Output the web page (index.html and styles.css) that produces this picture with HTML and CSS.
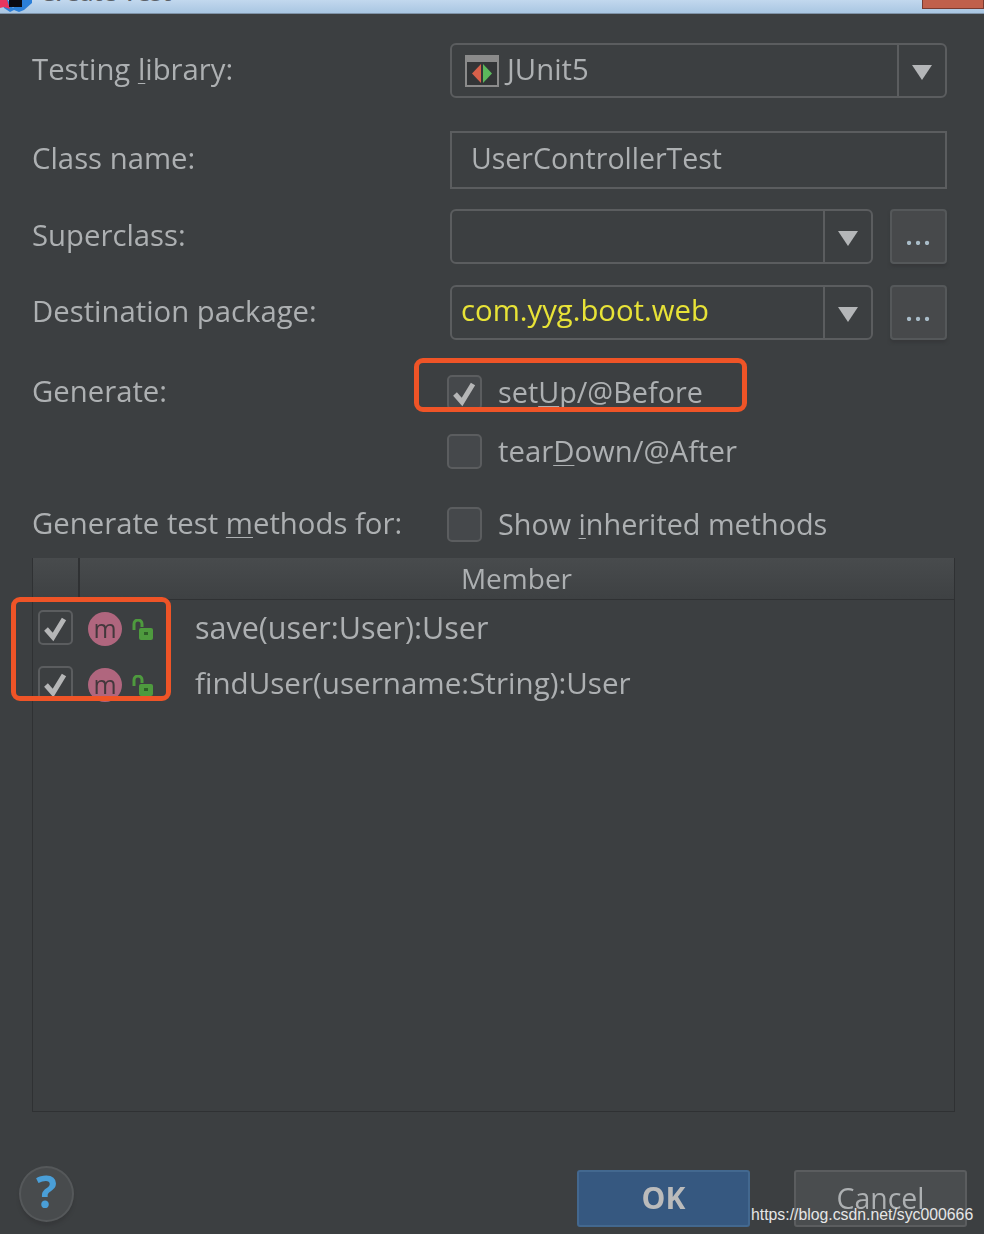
FILE: index.html
```html
<!DOCTYPE html>
<html lang="en">
<head>
<meta charset="utf-8">
<title>Create Test</title>
<link rel="stylesheet" href="styles.css">
</head>
<body>
<div class="titlebar">
  <svg class="app-icon" width="34" height="14" viewBox="0 0 34 14"><path d="M0 0h8l5 8 6-8h13v3l-8 7-5 2-5-2-4 2-6-4z" fill="#2b7fd8"/><path d="M0 0h7l3 9-6-2-4 1z" fill="#e8355f"/><rect x="9" y="0" width="13" height="7" fill="#0a0a12"/></svg>
  <span class="title-text">Create Test</span>
  <div class="close-btn"></div>
</div>
<main class="dialog">
  <div class="row row-library">
    <label class="label">Testing <u>l</u>ibrary:</label>
    <div class="combo combo-full">
      <div class="combo-value">
        <svg class="junit" width="34" height="32" viewBox="0 0 34 32"><rect width="34" height="32" fill="#8b8b8b"/><rect x="2" y="7" width="30" height="23" fill="#333537"/><path d="M16 9v19l-9-9.500z" fill="#d8604a"/><path d="M18 9v19l9-9.500z" fill="#5cb85c"/></svg>
        <span>JUnit5</span>
      </div>
      <div class="arrow-cell"><i class="arrow"></i></div>
    </div>
  </div>
  <div class="row row-class">
    <label class="label">Class name:</label>
    <div class="text-input">UserControllerTest</div>
  </div>
  <div class="row row-super">
    <label class="label">Superclass:</label>
    <div class="combo combo-short">
      <div class="combo-value"></div>
      <div class="arrow-cell"><i class="arrow"></i></div>
    </div>
    <div class="dots">...</div>
  </div>
  <div class="row row-dest">
    <label class="label">Destination package:</label>
    <div class="combo combo-short">
      <div class="combo-value pkg">com.yyg.boot.web</div>
      <div class="arrow-cell"><i class="arrow"></i></div>
    </div>
    <div class="dots">...</div>
  </div>
  <div class="row row-gen1">
    <label class="label">Generate:</label>
    <div class="check-wrap">
      <span class="check"><svg width="35" height="35" viewBox="0 0 35 35"><path class="tick" d="M8 19l7 8 11-18"/></svg></span>
      <span class="check-text">set<u>U</u>p/@Before</span>
    </div>
  </div>
  <div class="row row-gen2">
    <span class="label"></span>
    <div class="check-wrap">
      <span class="check"></span>
      <span class="check-text wide">tear<u>D</u>own/@After</span>
    </div>
  </div>
  <div class="row row-gen3">
    <label class="label">Generate test <u>m</u>ethods for:</label>
    <div class="check-wrap">
      <span class="check"></span>
      <span class="check-text">Show <u>i</u>nherited methods</span>
    </div>
  </div>
  <section class="table">
    <header class="table-head">
      <div class="head-check"></div>
      <div class="head-member">Member</div>
    </header>
    <div class="table-row">
      <span class="check check-small"><svg width="35" height="35" viewBox="0 0 35 35"><path class="tick" d="M8 19l7 8 11-18"/></svg></span>
      <span class="m-icon">m</span>
      <svg class="lock" width="24" height="22" viewBox="0 0 24 22"><path d="M3 11V5a4 4 0 0 1 8 0v3" fill="none" stroke="#4e9a3e" stroke-width="3"/><rect x="8" y="9" width="14" height="12" rx="2" fill="#4e9a3e"/><rect x="13" y="13" width="4" height="3" fill="#2f5f28"/></svg>
      <span class="sig sig-save">save(user:User):User</span>
    </div>
    <div class="table-row">
      <span class="check check-small"><svg width="35" height="35" viewBox="0 0 35 35"><path class="tick" d="M8 19l7 8 11-18"/></svg></span>
      <span class="m-icon">m</span>
      <svg class="lock" width="24" height="22" viewBox="0 0 24 22"><path d="M3 11V5a4 4 0 0 1 8 0v3" fill="none" stroke="#4e9a3e" stroke-width="3"/><rect x="8" y="9" width="14" height="12" rx="2" fill="#4e9a3e"/><rect x="13" y="13" width="4" height="3" fill="#2f5f28"/></svg>
      <span class="sig">findUser(username:String):User</span>
    </div>
  </section>
  <footer class="footer">
    <div class="help">?</div>
    <div class="btn btn-ok">OK</div>
    <div class="btn btn-cancel">Cancel</div>
  </footer>
</main>
<div class="mark mark-gen"></div>
<div class="mark mark-rows"></div>
<div class="watermark">https://blog.csdn.net/syc000666</div>
</body>
</html>
```

FILE: styles.css
```css
* { box-sizing: border-box; }
html, body { margin: 0; padding: 0; }
body {
  width: 984px;
  height: 1234px;
  overflow: hidden;
  position: relative;
  background: #3c3f41;
  color: #adb0b2;
  font-family: "Open Sans", "Noto Sans", sans-serif;
  font-size: 29.300px;
  line-height: 36px;
}
u { text-underline-offset: 3px; text-decoration-thickness: 1px; }
.titlebar {
  height: 14px;
  background: linear-gradient(#c2d8ee, #a9c6e2);
  border-bottom: 1px solid #7f93a8;
  display: flex;
  align-items: flex-start;
  position: relative;
  overflow: hidden;
}
.app-icon { flex: none; }
.title-text {
  font-size: 24px;
  line-height: 24px;
  font-weight: 600;
  margin: -20px 0 0 6px;
  color: #5a6068;
}
.close-btn {
  margin-left: auto;
  width: 62px;
  height: 9px;
  background: #c0604c;
  border: 1px solid #7a3a30;
  border-top: 0;
}
.dialog { padding: 29px 37px 0 32px; filter: blur(0.5px); }
.row { display: flex; align-items: center; }
.label { width: 418px; flex: none; padding-bottom: 4px; }
.row-library { height: 55px; }
.row-class { height: 58px; margin-top: 33px; }
.row-super { height: 55px; margin-top: 20px; }
.row-dest { height: 55px; margin-top: 21px; }
.row-gen1 { height: 35px; margin-top: 35px; }
.row-gen2 { height: 35px; margin-top: 24px; }
.row-gen3 { height: 35px; margin-top: 38px; }
.combo {
  display: flex;
  height: 55px;
  border: 2px solid #5b5d5f;
  border-radius: 6px;
}
.combo-full { width: 497px; }
.combo-short { width: 423px; }
.combo-value {
  flex: 1;
  min-width: 0;
  display: flex;
  align-items: center;
  padding-left: 13px;
}
.combo-value span { padding-bottom: 4px; }
.junit { margin-right: 8px; flex: none; }
.pkg { color: #e8e337; padding: 0 0 5px 9px; }
.arrow-cell {
  width: 48px;
  flex: none;
  border-left: 2px solid #5b5d5f;
  display: flex;
  align-items: center;
  justify-content: center;
}
.arrow {
  display: block;
  width: 0;
  height: 0;
  margin-top: 4px;
  border-left: 10px solid transparent;
  border-right: 10px solid transparent;
  border-top: 15px solid #b4b6b8;
}
.text-input {
  width: 497px;
  height: 58px;
  border: 2px solid #5b5d5f;
  padding: 0 0 4px 19px;
  display: flex;
  align-items: center;
  font-size: 28.500px;
}
.dots {
  width: 57px;
  height: 55px;
  margin-left: 17px;
  flex: none;
  background: #47494b;
  border: 2px solid #55585a;
  border-radius: 4px;
  box-shadow: 0 3px 3px #37393b;
  text-align: center;
  line-height: 46px;
  letter-spacing: 1px;
  color: #a9bcc8;
  font-weight: 600;
}
.check-wrap { display: flex; align-items: center; margin-left: -3px; gap: 16px; }
.check-text { font-size: 28.800px; padding-bottom: 2px; }
.check-text.wide { font-size: 29.300px; }
.check {
  width: 35px;
  height: 35px;
  flex: none;
  display: block;
  background: #45484b;
  border: 2px solid #5b5d5f;
  border-radius: 5px;
  position: relative;
}
.check svg { position: absolute; left: -2px; top: -2px; }
.tick { fill: none; stroke: #b5b6b7; stroke-width: 5; }
.table {
  margin-top: 16px;
  width: 923px;
  height: 554px;
  border: 1px solid #2f3133;
  border-top: 0;
}
.table-head {
  height: 42px;
  display: flex;
  background: linear-gradient(#484b4d, #3e4143);
  border-bottom: 1px solid #2f3133;
}
.head-check { width: 47px; border-right: 2px solid #2f3133; flex: none; }
.head-member { flex: 1; text-align: center; line-height: 40px; font-size: 28px; padding-right: 1px; }
.table-row {
  height: 56px;
  display: flex;
  align-items: center;
  padding: 0 0 2px 5px;
}
.check-small { background: #3c3f41; }
.m-icon {
  width: 34px;
  height: 34px;
  flex: none;
  margin: 3px 0 0 15px;
  border-radius: 50%;
  background: #b0667e;
  color: #43383c;
  text-align: center;
  font-size: 25px;
  font-weight: 500;
  line-height: 32px;
}
.lock { flex: none; margin: 6px 0 0 9px; }
.sig { margin-left: 40px; font-size: 29.600px; }
.sig-save { font-size: 30.500px; }
.footer {
  position: relative;
  display: flex;
  align-items: flex-start;
  margin: 54px -20px 0 -13px;
  padding-top: 4px;
}
.help {
  width: 55px;
  height: 56px;
  margin-top: -4px;
  border-radius: 50%;
  background: #484b4d;
  border: 2px solid #55585a;
  box-shadow: 0 4px 3px #37393b;
  color: #4a9fd8;
  font-weight: 700;
  font-size: 44px;
  line-height: 46px;
  text-align: center;
}
.btn {
  width: 173px;
  height: 57px;
  border-radius: 3px;
  text-align: center;
  line-height: 52px;
}
.btn-ok {
  margin-left: auto;
  background: #365880;
  border: 2px solid #43688f;
  color: #bbbbbb;
  font-weight: 700;
  font-size: 30px;
}
.btn-cancel {
  margin-left: 44px;
  background: #4a4d4f;
  border: 2px solid #5b5d5f;
  font-size: 28.500px;
}
.mark {
  position: absolute;
  border: 5px solid #ef5427;
  border-radius: 9px;
}
.mark-gen { left: 414px; top: 358px; width: 333px; height: 54px; }
.mark-rows { left: 11px; top: 597px; width: 160px; height: 104px; }
.watermark {
  position: absolute;
  left: 751px;
  top: 1204px;
  font-family: "Liberation Sans", sans-serif;
  font-size: 15.800px;
  line-height: 22px;
  color: #e6e6e6;
}
```
